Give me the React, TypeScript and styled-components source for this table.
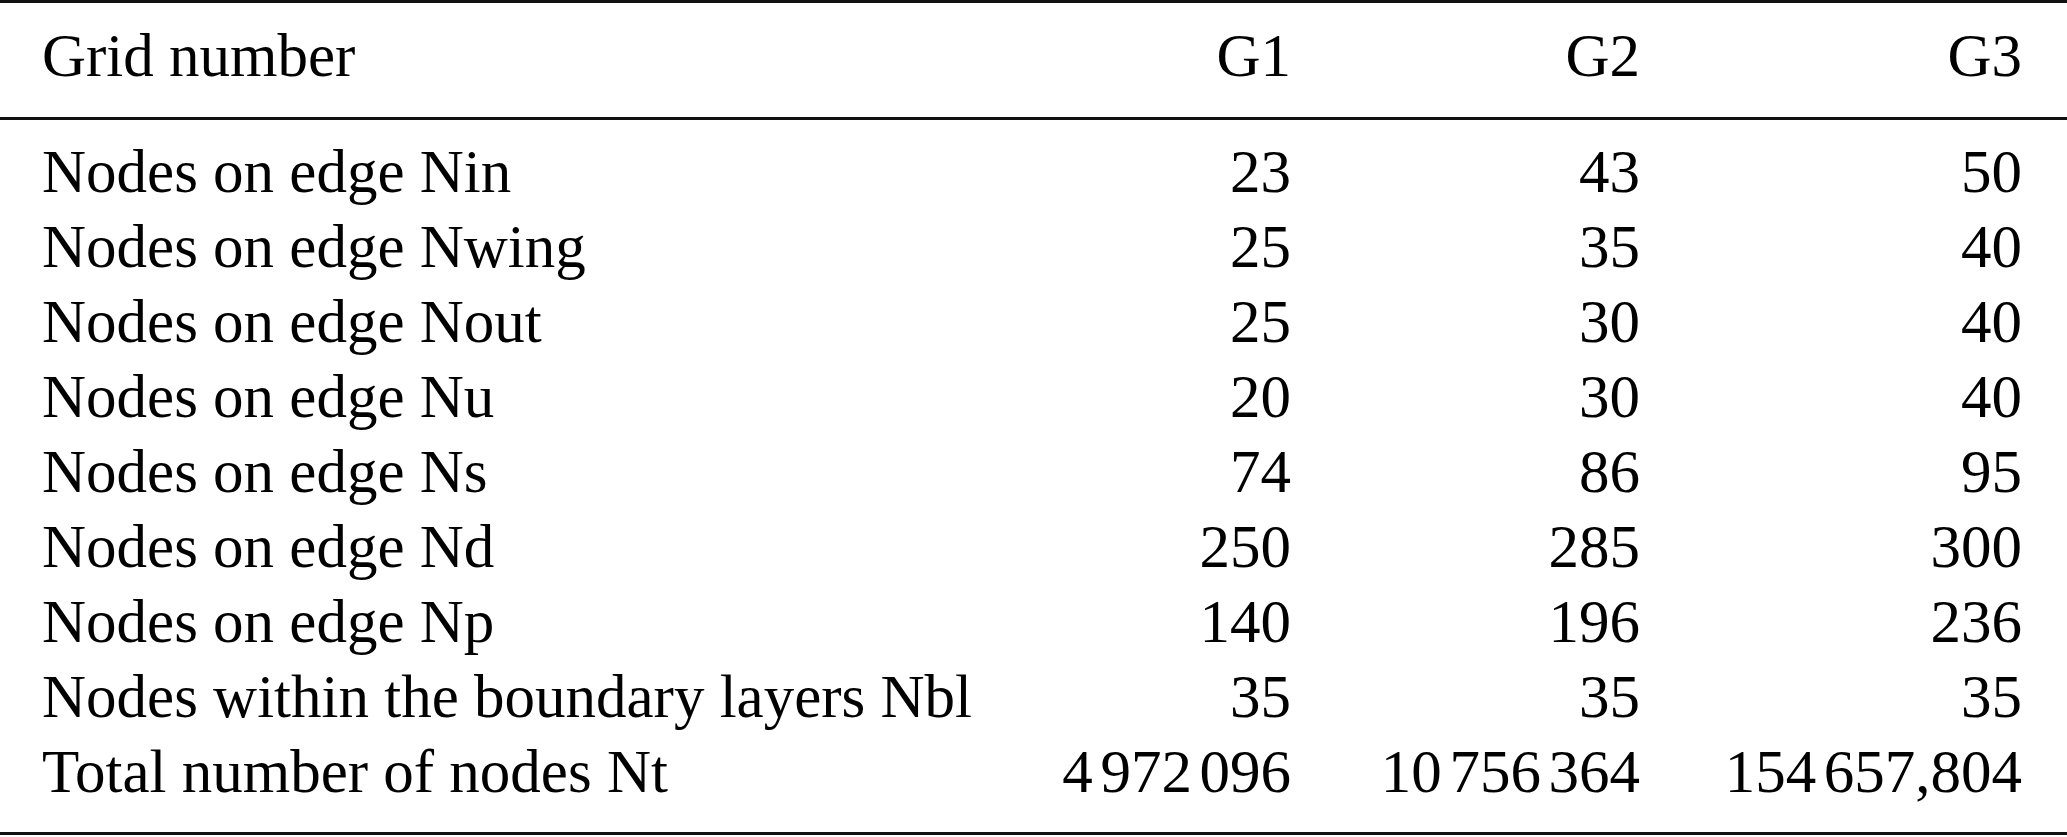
import styled, { createGlobalStyle } from "styled-components";

const GlobalStyle = createGlobalStyle`
  html, body {
    margin: 0;
    padding: 0;
    background: #fff;
  }
  body {
    font-family: "Liberation Serif", "Times New Roman", serif;
    color: #000;
  }
`;

const Table = styled.div`
  width: 2067px;
  display: flex;
  flex-direction: column;
`;

const Rule = styled.div`
  height: 3px;
  background: #111;
`;

const Section = styled.div<{ $top: number; $bottom: number }>`
  padding-top: ${(p) => p.$top}px;
  padding-bottom: ${(p) => p.$bottom}px;
`;

const Row = styled.div`
  display: grid;
  grid-template-columns: 1fr 300px 349px 382px;
  padding: 0 45px 0 42px;
  height: 75px;
  font-size: 61px;
  line-height: 75px;
  white-space: nowrap;
`;

const Label = styled.div`
  text-align: left;
`;

const Value = styled.div`
  text-align: right;
`;

// digit-group separator, a narrow space
const Thin = styled.span`
  font-size: 0.5em;
`;

const rows: [string, string, string, string][] = [
  ["Nodes on edge Nin", "23", "43", "50"],
  ["Nodes on edge Nwing", "25", "35", "40"],
  ["Nodes on edge Nout", "25", "30", "40"],
  ["Nodes on edge Nu", "20", "30", "40"],
  ["Nodes on edge Ns", "74", "86", "95"],
  ["Nodes on edge Nd", "250", "285", "300"],
  ["Nodes on edge Np", "140", "196", "236"],
  ["Nodes within the boundary layers Nbl", "35", "35", "35"],
  ["Total number of nodes Nt", "4 972 096", "10 756 364", "154 657,804"],
];

function Num({ value }: { value: string }) {
  const parts = value.split(" ");
  return (
    <>
      {parts.map((part, i) => (
        <span key={i}>
          {i > 0 && <Thin> </Thin>}
          {part}
        </span>
      ))}
    </>
  );
}

function App() {
  return (
    <Table>
      <GlobalStyle />
      <Rule />
      <Section $top={15} $bottom={24}>
        <Row>
          <Label>Grid number</Label>
          <Value>G1</Value>
          <Value>G2</Value>
          <Value>G3</Value>
        </Row>
      </Section>
      <Rule />
      <Section $top={14} $bottom={23}>
        {rows.map(([label, g1, g2, g3]) => (
          <Row key={label}>
            <Label>{label}</Label>
            <Value>
              <Num value={g1} />
            </Value>
            <Value>
              <Num value={g2} />
            </Value>
            <Value>
              <Num value={g3} />
            </Value>
          </Row>
        ))}
      </Section>
      <Rule />
    </Table>
  );
}

export default App;
